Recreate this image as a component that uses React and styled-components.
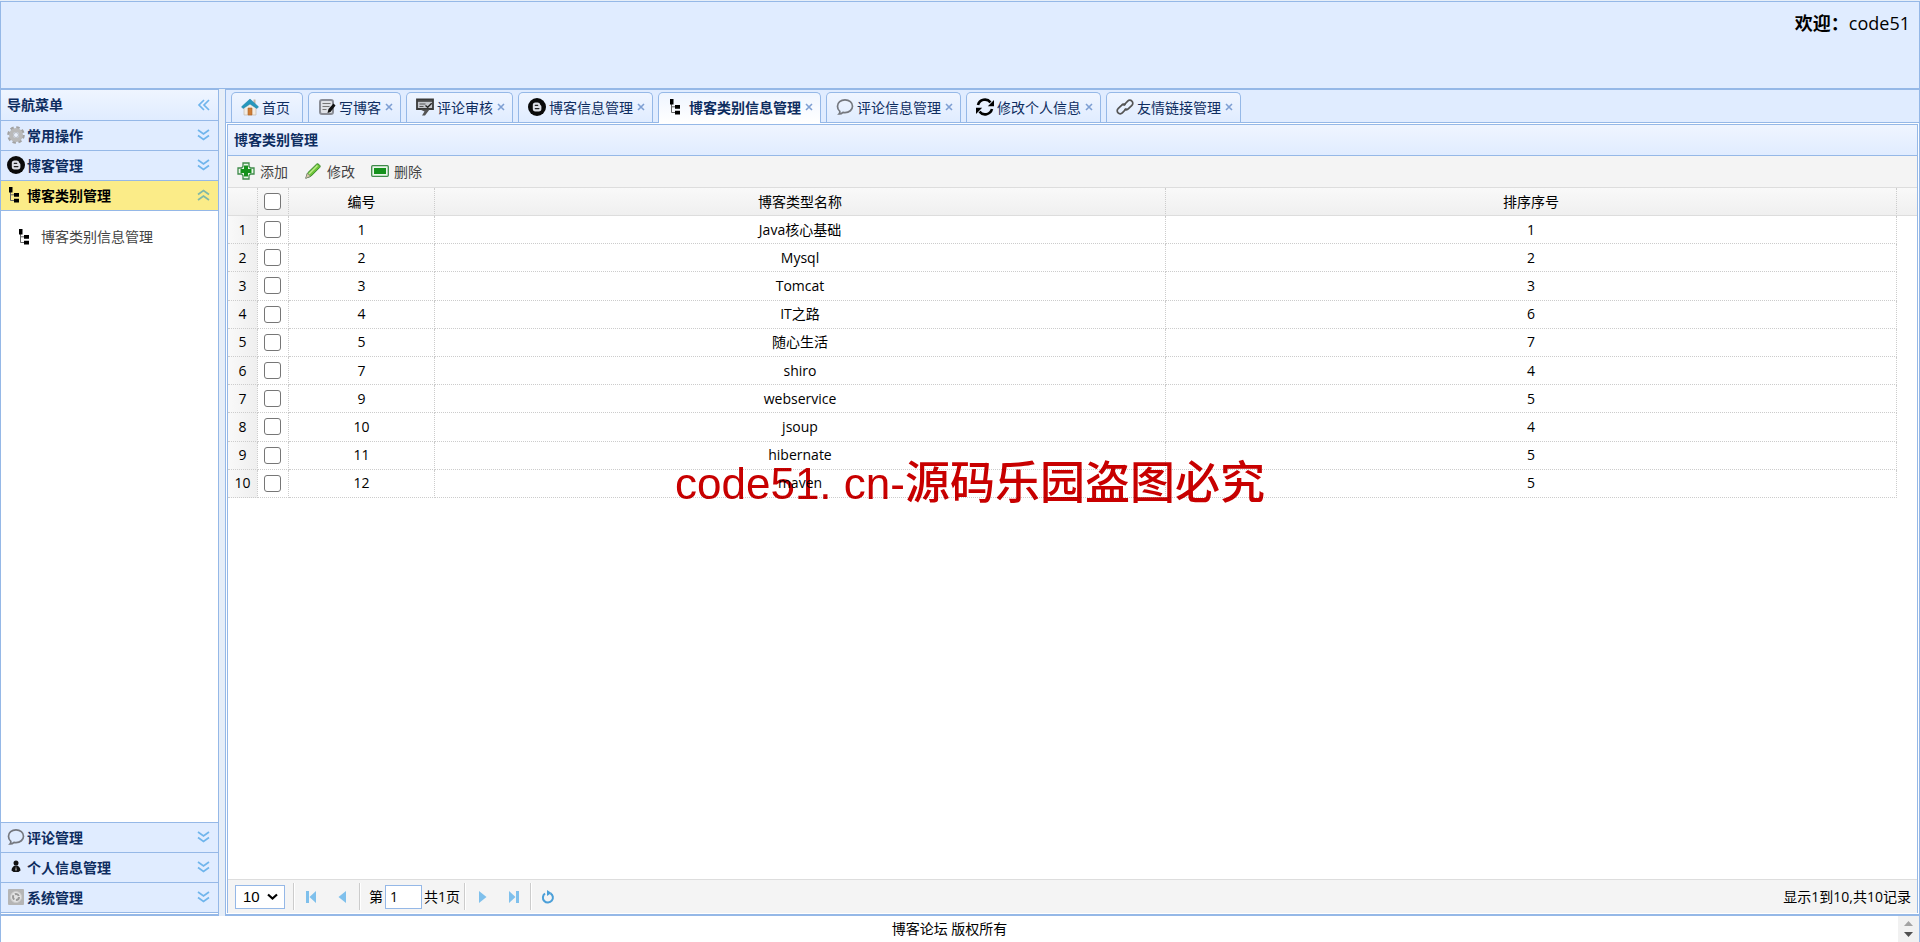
import { useState } from 'react';
import styled, { createGlobalStyle } from 'styled-components';

const GlobalStyle = createGlobalStyle`
  * {
    box-sizing: border-box;
  }
  html,
  body {
    margin: 0;
    height: 100%;
    overflow: hidden;
  }
  body,
  button,
  input,
  select {
    font-family: 'Open Sans', 'Noto Sans CJK SC', sans-serif;
    font-size: 14px;
  }
  button {
    background: none;
    border: 0;
    padding: 0;
    cursor: pointer;
  }
  svg {
    display: block;
    flex: none;
  }
`;

const Page = styled.div`
  display: flex;
  flex-direction: column;
  height: 100vh;
  padding-top: 1px;
  background: #e6eef8;
  color: #000;
  line-height: 20px;
`;

const Header = styled.header`
  flex: none;
  height: 88px;
  padding: 7px 9px;
  text-align: right;
  font-size: 18px;
  line-height: 28px;
  background: #e0ecff;
  border: 1px solid #95b8e7;
`;

const Main = styled.main`
  display: flex;
  flex: 1;
  gap: 6px;
  min-height: 0;
`;

const Sidebar = styled.nav`
  display: flex;
  flex-direction: column;
  flex: none;
  width: 219px;
  padding-bottom: 1px;
  background: #fff;
  border: 1px solid #95b8e7;
  border-bottom-width: 2px;
`;

const SideTitle = styled.div`
  display: flex;
  align-items: center;
  justify-content: space-between;
  height: 31px;
  padding: 0 8px 0 6px;
  color: #0e2d5f;
  font-weight: bold;
  background: linear-gradient(to bottom, #eff5ff, #e0ecff);
  border-bottom: 1px solid #95b8e7;
`;

const SideItem = styled.button`
  display: flex;
  align-items: center;
  gap: 2px;
  flex: none;
  width: 100%;
  height: 30px;
  padding: 0 8px 2px 6px;
  font-weight: bold;
  color: ${(props) => (props.$active ? '#000' : '#0e2d5f')};
  background: ${(props) => (props.$active ? '#fbec88' : '#e0ecff')};
  border-bottom: 1px solid #95b8e7;
  .name {
    flex: 1;
    text-align: left;
  }
`;

const SideBody = styled.div`
  flex: 1;
  padding: 16px;
  border-bottom: 1px solid #95b8e7;
`;

const SideLink = styled.a`
  display: flex;
  align-items: center;
  gap: 6px;
  color: #444;
  text-decoration: none;
`;

const Content = styled.section`
  display: flex;
  flex-direction: column;
  flex: 1;
  min-width: 0;
  background: #fff;
  border: 1px solid #95b8e7;
  border-bottom-width: 2px;
`;

const TabBar = styled.div`
  display: flex;
  align-items: flex-end;
  gap: 5px;
  flex: none;
  height: 33px;
  padding: 0 5px;
  background: #e0ecff;
  border-bottom: 1px solid #95b8e7;
`;

const Tab = styled.div`
  display: flex;
  align-items: center;
  height: ${(props) => (props.$active ? 31 : 30)}px;
  margin-bottom: ${(props) => (props.$active ? -1 : 0)}px;
  padding: 0 ${(props) => (props.$closable ? 7 : 12)}px 2px 9px;
  font-weight: ${(props) => (props.$active ? 'bold' : 'normal')};
  background: ${(props) =>
    props.$active
      ? 'linear-gradient(to bottom, #eff5ff, #fff)'
      : 'linear-gradient(to bottom, #eff5ff, #e0ecff)'};
  border: 1px solid #95b8e7;
  border-bottom: 0;
  border-radius: 5px 5px 0 0;
`;

const TabName = styled.button`
  display: flex;
  align-items: center;
  gap: 3px;
  color: #0e2d5f;
  font-weight: inherit;
  white-space: nowrap;
`;

const TabClose = styled.button`
  margin-left: 4px;
`;

const Panel = styled.div`
  display: flex;
  flex-direction: column;
  flex: 1;
  min-height: 0;
  margin: 1px;
  border: 1px solid #95b8e7;
  border-bottom: 0;
`;

const PanelTitle = styled.div`
  flex: none;
  height: 31px;
  padding: 0 6px;
  line-height: 30px;
  font-weight: bold;
  color: #0e2d5f;
  background: linear-gradient(to bottom, #eff5ff, #e0ecff);
  border-bottom: 1px solid #95b8e7;
`;

const Toolbar = styled.div`
  display: flex;
  align-items: center;
  gap: 16px;
  flex: none;
  height: 32px;
  padding: 0 9px 2px;
  background: #f4f4f4;
  border-bottom: 1px solid #ddd;
`;

const ToolButton = styled.button`
  display: flex;
  align-items: center;
  gap: 5px;
  color: #444;
`;

const GridView = styled.div`
  flex: 1;
  min-height: 0;
  overflow: hidden;
`;

const Table = styled.table`
  width: 100%;
  height: 310px;
  table-layout: fixed;
  border-collapse: separate;
  border-spacing: 0;
  th,
  td {
    height: 28px;
    padding: 0;
    text-align: center;
    font-weight: normal;
    border-right: 1px dotted #ccc;
    border-bottom: 1px dotted #ccc;
  }
  thead tr {
    background: linear-gradient(to bottom, #f9f9f9, #efefef);
  }
  thead th {
    border-bottom: 1px solid #ddd;
  }
  tbody th {
    background: linear-gradient(to right, #f9f9f9, #efefef);
  }
  tr > :last-child {
    border-right: 0;
  }
  tbody td:last-child {
    border-bottom: 0;
  }
`;

const Col = styled.col`
  width: ${(props) => props.$width}px;
`;

const CheckBox = styled.input`
  display: block;
  width: 17px;
  height: 17px;
  margin: 0 6px;
  appearance: none;
  background: #fff;
  border: 1px solid #767676;
  border-radius: 3px;
  &:checked {
    background: #0075ff;
  }
`;

const Pager = styled.div`
  display: flex;
  align-items: center;
  flex: none;
  height: 34px;
  padding: 0 6px 0 7px;
  background: #f4f4f4;
  border-top: 1px solid #ddd;
`;

const SelectBox = styled.div`
  position: relative;
  margin-right: 8px;
  select {
    display: block;
    width: 50px;
    height: 24px;
    padding: 0 7px;
    appearance: none;
    background: #fff;
    border: 1px solid #95b8e7;
    border-radius: 0;
    font-family: 'Liberation Sans', sans-serif;
    font-size: 15px;
  }
  svg {
    position: absolute;
    right: 7px;
    top: 8px;
    pointer-events: none;
  }
`;

const Separator = styled.span`
  width: 2px;
  height: 27px;
  border-left: 1px solid #ccc;
  border-right: 1px solid #fff;
`;

const PageButton = styled.button`
  display: flex;
  align-items: center;
  justify-content: center;
  width: 32px;
  height: 24px;
`;

const PageLabel = styled.label`
  display: flex;
  align-items: center;
  gap: 2px;
  padding: 0 4px 0 8px;
  input {
    width: 37px;
    height: 24px;
    padding: 0 4px;
    border: 1px solid #95b8e7;
  }
`;

const PageInfo = styled.div`
  margin-left: auto;
`;

const Footer = styled.footer`
  display: flex;
  flex: none;
  height: 26px;
  background: #fff;
  border: 1px solid #95b8e7;
  border-width: 0 1px;
  p {
    flex: 1;
    margin: 0;
    line-height: 26px;
    text-align: center;
  }
`;

const Stepper = styled.div`
  display: flex;
  flex-direction: column;
  align-items: center;
  justify-content: center;
  gap: 6px;
  width: 21px;
  background: #f1f1f1;
`;

const Watermark = styled.div`
  position: fixed;
  top: calc(50% - 17px);
  left: 20px;
  right: 0;
  text-align: center;
  line-height: 60px;
  font-family: 'Liberation Sans', 'Noto Sans CJK SC', sans-serif;
  font-size: 45px;
  font-weight: 500;
  color: #c80000;
  mix-blend-mode: multiply;
  pointer-events: none;
  span {
    font-size: 44px;
  }
`;

const Icon = ({ size = 18, children }) => (
  <svg width={size} height={size} viewBox="0 0 18 18" fill="none">
    {children}
  </svg>
);

const HomeIcon = () => (
  <Icon>
    <path d="M3 9v8h12V9L9 4z" fill="#f3ece2" stroke="#c9bfb4" strokeWidth="0.8" />
    <path d="M12.500 1.500h2V6h-2z" fill="#c9b9a8" />
    <path d="M0.500 8.800 9 1l8.500 7.800-1.500 1.700q-3.500-2-7-4.500-3.500 2.500-7 4.500z" fill="#2597bd" stroke="#1b7fa5" strokeWidth="0.500" />
    <path d="M7 10h4v7H7z" fill="#cf7d35" stroke="#a9642c" strokeWidth="0.600" />
  </Icon>
);

const WriteIcon = () => (
  <Icon>
    <rect x="2" y="2" width="13" height="14" rx="2" fill="#dfe1e6" stroke="#8a8d96" strokeWidth="2" />
    <path d="M4.500 5.500h8M4.500 8.500h7M4.500 11.500h4" stroke="#777" strokeWidth="1.200" />
    <path d="m9.500 15 1-4 5-5.500 2 2L12.500 14z" fill="#111" />
  </Icon>
);

const ReviewIcon = () => (
  <Icon>
    <path d="M1 1.500h16v9.500H1z" fill="#c4c6cc" stroke="#3a3a3a" strokeWidth="1.800" />
    <path d="M1 3h16" stroke="#3a3a3a" strokeWidth="1.500" />
    <path d="M3.500 6h6M3.500 8.500h4" stroke="#555" strokeWidth="1.200" />
    <path d="m9.500 7.500 2.200 1.800 4-4" stroke="#222" strokeWidth="1.300" />
    <path d="M4 11.500h9.500L9 17.500H6l2.500-4z" fill="#555" />
  </Icon>
);

const BlogIcon = () => (
  <Icon>
    <circle cx="9" cy="9" r="9" fill="#0a0a0a" />
    <path d="M4.800 7a2.600 2.600 0 0 1 2.600-2.600h2.200a2.600 2.600 0 0 1 2.600 2.200c0 .8 1.200.6 1.200 1.800v2.400a2.600 2.600 0 0 1-2.600 2.600H7.400a2.600 2.600 0 0 1-2.600-2.600z" fill="#dcdfe6" />
    <path d="M7.300 7.300h2.400M7.300 10.600h3.600" stroke="#222" strokeWidth="1.300" strokeLinecap="round" />
  </Icon>
);

const TreeIcon = () => (
  <Icon>
    <path d="M3.500 4v10.500H8M3.500 8.800H8" stroke="#666" />
    <path d="M2 1h3.500v5.500H2zM7 7h5v3.800H7zM7 12.800h5v3.800H7z" fill="#000" />
  </Icon>
);

const BubbleIcon = () => (
  <Icon>
    <path d="M3 16c.8-.8 1-1.600.8-2.700A6.400 6.400 0 0 1 1.500 8.200C1.500 4.600 4.800 1.800 9 1.800s7.500 2.800 7.500 6.400S13.200 14.600 9 14.600c-.8 0-1.400-.1-2-.2-1 1-2.500 1.700-4 1.600z" stroke="#75787f" strokeWidth="1.700" />
  </Icon>
);

const RefreshIcon = () => (
  <Icon>
    <path d="M2 7A7.200 7.200 0 0 1 14.500 4.300M16 11A7.200 7.200 0 0 1 3.500 13.700" stroke="#000" strokeWidth="2.600" />
    <path d="M18 2v6.300h-6.200zM0 16V9.700h6.200z" fill="#000" />
  </Icon>
);

const LinkIcon = () => (
  <Icon>
    <path d="m7.500 7.500 4.200-4.400a2.900 2.900 0 0 1 4.200 0 2.900 2.900 0 0 1 0 4.200l-3.400 3.400a2.900 2.900 0 0 1-4 .2" stroke="#555" strokeWidth="1.700" />
    <path d="m10.500 10.500-4.200 4.400a2.900 2.900 0 0 1-4.200 0 2.900 2.900 0 0 1 0-4.200l3.400-3.400a2.900 2.900 0 0 1 4-.2" stroke="#555" strokeWidth="1.700" />
  </Icon>
);

const GearIcon = () => (
  <Icon>
    <circle cx="9" cy="9" r="7.500" stroke="#a2a2a2" strokeWidth="2.600" strokeDasharray="3.400 2.490" />
    <circle cx="9" cy="9" r="5" stroke="#b9b9b9" strokeWidth="4" />
    <circle cx="9" cy="9" r="2.500" fill="#e8eefa" stroke="#999" strokeWidth="0.600" />
  </Icon>
);

const PersonIcon = () => (
  <Icon>
    <circle cx="9" cy="5" r="2.500" fill="#111" />
    <path d="M4.500 12.500C4.500 9.500 6.500 7.500 9 7.500s4.500 2 4.500 5l-2 1.500h-5z" fill="#111" />
    <path d="m9 8-.8 3.500.8 2 .8-2z" fill="#999" />
  </Icon>
);

const SystemIcon = () => (
  <Icon>
    <rect x="1" y="1" width="16" height="16" rx="1" fill="#b5b5b5" />
    <circle cx="9" cy="9" r="5.500" fill="#e4e4e4" stroke="#ccc" />
    <circle cx="9" cy="9" r="3" stroke="#999" strokeWidth="2" strokeDasharray="4.700 1.600" />
  </Icon>
);

const AddIcon = () => (
  <Icon>
    <path d="M6 1h6v3.500L13.500 6H17v6h-3.500L12 13.500V17H6v-3.500L4.500 12H1V6h3.500L6 4.500z" fill="#eaf6ea" stroke="#3f8a4a" strokeWidth="1.300" />
    <path d="M7 3.500h4V7h3.500v4H11v3.500H7V11H3.500V7H7z" fill="#14911b" />
  </Icon>
);

const EditIcon = () => (
  <Icon>
    <path d="M2 16 3.500 11 12.500 2.200q1-1 2.400.2l.8.8q1 1.200 0 2.300L6.800 14.400z" fill="#6cc437" stroke="#35852a" />
    <path d="m5 12 8.500-8.500" stroke="#bdea8c" strokeWidth="1.500" />
    <path d="m1.500 16.500 1.800-5.200 3.200 3z" fill="#d8c8a8" stroke="#777" strokeWidth="0.600" />
  </Icon>
);

const RemoveIcon = () => (
  <Icon>
    <rect x="0.700" y="3.700" width="16.600" height="10.600" rx="1" fill="#eaf6ea" stroke="#3f8a4a" strokeWidth="1.300" />
    <rect x="3" y="6" width="12" height="6" fill="#14911b" />
  </Icon>
);

// double arrows used on the accordion headers
const arrows = {
  left: 'M7 1 2 6l5 5M12 1 7 6l5 5',
  down: 'M1 1l5.500 4 5.500-4M1 6.500l5.500 4 5.500-4',
  up: 'M1 5.500l5.500-4 5.500 4M1 11l5.500-4 5.500 4',
};

const DoubleArrow = ({ dir, color = '#6fb5ec' }) => (
  <svg width="13" height="12" viewBox="0 0 13 12" fill="none">
    <path d={arrows[dir]} stroke={color} strokeWidth="1.700" />
  </svg>
);

const CloseIcon = () => (
  <svg width="8" height="8" viewBox="0 0 8 8">
    <path d="m1 1 6 6M7 1 1 7" stroke="#7e9fd3" strokeWidth="1.600" />
  </svg>
);

const PageIcon = ({ d }) => (
  <svg width="12" height="12" viewBox="0 0 12 12">
    <path d={d} fill="#7fc0ec" />
  </svg>
);

const topMenus = [
  { name: '常用操作', icon: <GearIcon /> },
  { name: '博客管理', icon: <BlogIcon /> },
  { name: '博客类别管理', icon: <TreeIcon />, active: true },
];

const bottomMenus = [
  { name: '评论管理', icon: <BubbleIcon /> },
  { name: '个人信息管理', icon: <PersonIcon /> },
  { name: '系统管理', icon: <SystemIcon /> },
];

const tabs = [
  { name: '首页', icon: <HomeIcon />, fixed: true },
  { name: '写博客', icon: <WriteIcon /> },
  { name: '评论审核', icon: <ReviewIcon /> },
  { name: '博客信息管理', icon: <BlogIcon /> },
  { name: '博客类别信息管理', icon: <TreeIcon /> },
  { name: '评论信息管理', icon: <BubbleIcon /> },
  { name: '修改个人信息', icon: <RefreshIcon /> },
  { name: '友情链接管理', icon: <LinkIcon /> },
];

const blogTypes = [
  { id: 1, typeName: 'Java核心基础', orderNo: 1 },
  { id: 2, typeName: 'Mysql', orderNo: 2 },
  { id: 3, typeName: 'Tomcat', orderNo: 3 },
  { id: 4, typeName: 'IT之路', orderNo: 6 },
  { id: 5, typeName: '随心生活', orderNo: 7 },
  { id: 7, typeName: 'shiro', orderNo: 4 },
  { id: 9, typeName: 'webservice', orderNo: 5 },
  { id: 10, typeName: 'jsoup', orderNo: 4 },
  { id: 11, typeName: 'hibernate', orderNo: 5 },
  { id: 12, typeName: 'maven', orderNo: 5 },
];

const MenuItem = ({ menu }) => (
  <SideItem type="button" $active={menu.active}>
    {menu.icon}
    <span className="name">{menu.name}</span>
    <DoubleArrow
      dir={menu.active ? 'up' : 'down'}
      color={menu.active ? '#7fb8a8' : undefined}
    />
  </SideItem>
);

const App = () => {
  const [current, setCurrent] = useState('博客类别信息管理');
  const [checked, setChecked] = useState([]);
  const [page, setPage] = useState('1');

  const handlerCheck = (id) => {
    setChecked((list) =>
      list.includes(id) ? list.filter((el) => el !== id) : [...list, id]
    );
  };

  const handlerCheckAll = (e) => {
    setChecked(e.target.checked ? blogTypes.map((el) => el.id) : []);
  };

  return (
    <Page>
      <GlobalStyle />
      <Header>
        <strong>欢迎：</strong>code51
      </Header>
      <Main>
        <Sidebar>
          <SideTitle>
            导航菜单
            <button type="button" aria-label="collapse">
              <DoubleArrow dir="left" />
            </button>
          </SideTitle>
          {topMenus.map((menu) => (
            <MenuItem key={menu.name} menu={menu} />
          ))}
          <SideBody>
            <SideLink href="#type">
              <TreeIcon />
              博客类别信息管理
            </SideLink>
          </SideBody>
          {bottomMenus.map((menu) => (
            <MenuItem key={menu.name} menu={menu} />
          ))}
        </Sidebar>

        <Content>
          <TabBar>
            {tabs.map((tab) => (
              <Tab
                key={tab.name}
                $active={tab.name === current}
                $closable={!tab.fixed}
              >
                <TabName type="button" onClick={() => setCurrent(tab.name)}>
                  {tab.icon}
                  {tab.name}
                </TabName>
                {!tab.fixed && (
                  <TabClose type="button" aria-label="close">
                    <CloseIcon />
                  </TabClose>
                )}
              </Tab>
            ))}
          </TabBar>
          <Panel>
            <PanelTitle>博客类别管理</PanelTitle>
            <Toolbar>
              <ToolButton type="button">
                <AddIcon />
                添加
              </ToolButton>
              <ToolButton type="button">
                <EditIcon />
                修改
              </ToolButton>
              <ToolButton type="button">
                <RemoveIcon />
                删除
              </ToolButton>
            </Toolbar>
            <GridView>
              <Table>
                <colgroup>
                  <Col $width={30} />
                  <Col $width={31} />
                  <Col $width={146} />
                  <col />
                  <col />
                  <Col $width={20} />
                </colgroup>
                <thead>
                  <tr>
                    <th />
                    <th>
                      <CheckBox
                        type="checkbox"
                        aria-label="all"
                        checked={checked.length === blogTypes.length}
                        onChange={handlerCheckAll}
                      />
                    </th>
                    <th>编号</th>
                    <th>博客类型名称</th>
                    <th>排序序号</th>
                    <th />
                  </tr>
                </thead>
                <tbody>
                  {blogTypes.map((type, index) => (
                    <tr key={type.id}>
                      <th>{index + 1}</th>
                      <td>
                        <CheckBox
                          type="checkbox"
                          aria-label={type.typeName}
                          checked={checked.includes(type.id)}
                          onChange={() => handlerCheck(type.id)}
                        />
                      </td>
                      <td>{type.id}</td>
                      <td>{type.typeName}</td>
                      <td>{type.orderNo}</td>
                      <td />
                    </tr>
                  ))}
                </tbody>
              </Table>
            </GridView>
            <Pager>
              <SelectBox>
                <select aria-label="page size" defaultValue="10">
                  <option>10</option>
                  <option>20</option>
                  <option>50</option>
                </select>
                <svg width="11" height="8" viewBox="0 0 11 8" fill="none">
                  <path d="m1 1.500 4.500 4 4.500-4" stroke="#000" strokeWidth="2.200" />
                </svg>
              </SelectBox>
              <Separator />
              <PageButton type="button" aria-label="first">
                <PageIcon d="M1 0h3v12H1zM11 0v12L4.500 6z" />
              </PageButton>
              <PageButton type="button" aria-label="prev">
                <PageIcon d="M9 0v12L1.500 6z" />
              </PageButton>
              <Separator />
              <PageLabel>
                第
                <input value={page} onChange={(e) => setPage(e.target.value)} />
                共1页
              </PageLabel>
              <Separator />
              <PageButton type="button" aria-label="next">
                <PageIcon d="M3 0v12l7.500-6z" />
              </PageButton>
              <PageButton type="button" aria-label="last">
                <PageIcon d="M1 0v12l6.500-6zM8 0h3v12H8z" />
              </PageButton>
              <Separator />
              <PageButton type="button" aria-label="reload">
                <svg width="14" height="14" viewBox="0 0 14 14" fill="none">
                  <path d="M4 3.500a5 5 0 1 0 5.500-.2" stroke="#4b9fd8" strokeWidth="2" />
                  <path d="M6 0v6l4.500-3z" fill="#4b9fd8" />
                </svg>
              </PageButton>
              <PageInfo>显示1到10,共10记录</PageInfo>
            </Pager>
          </Panel>
        </Content>
      </Main>
      <Footer>
        <p>博客论坛 版权所有</p>
        <Stepper>
          <svg width="9" height="5" viewBox="0 0 9 5">
            <path d="M0 5 4.500 0 9 5z" fill="#a3a3a3" />
          </svg>
          <svg width="9" height="5" viewBox="0 0 9 5">
            <path d="M0 0h9L4.500 5z" fill="#505050" />
          </svg>
        </Stepper>
      </Footer>
      <Watermark>
        <span>code51. cn-</span>源码乐园盗图必究
      </Watermark>
    </Page>
  );
};

export default App;
